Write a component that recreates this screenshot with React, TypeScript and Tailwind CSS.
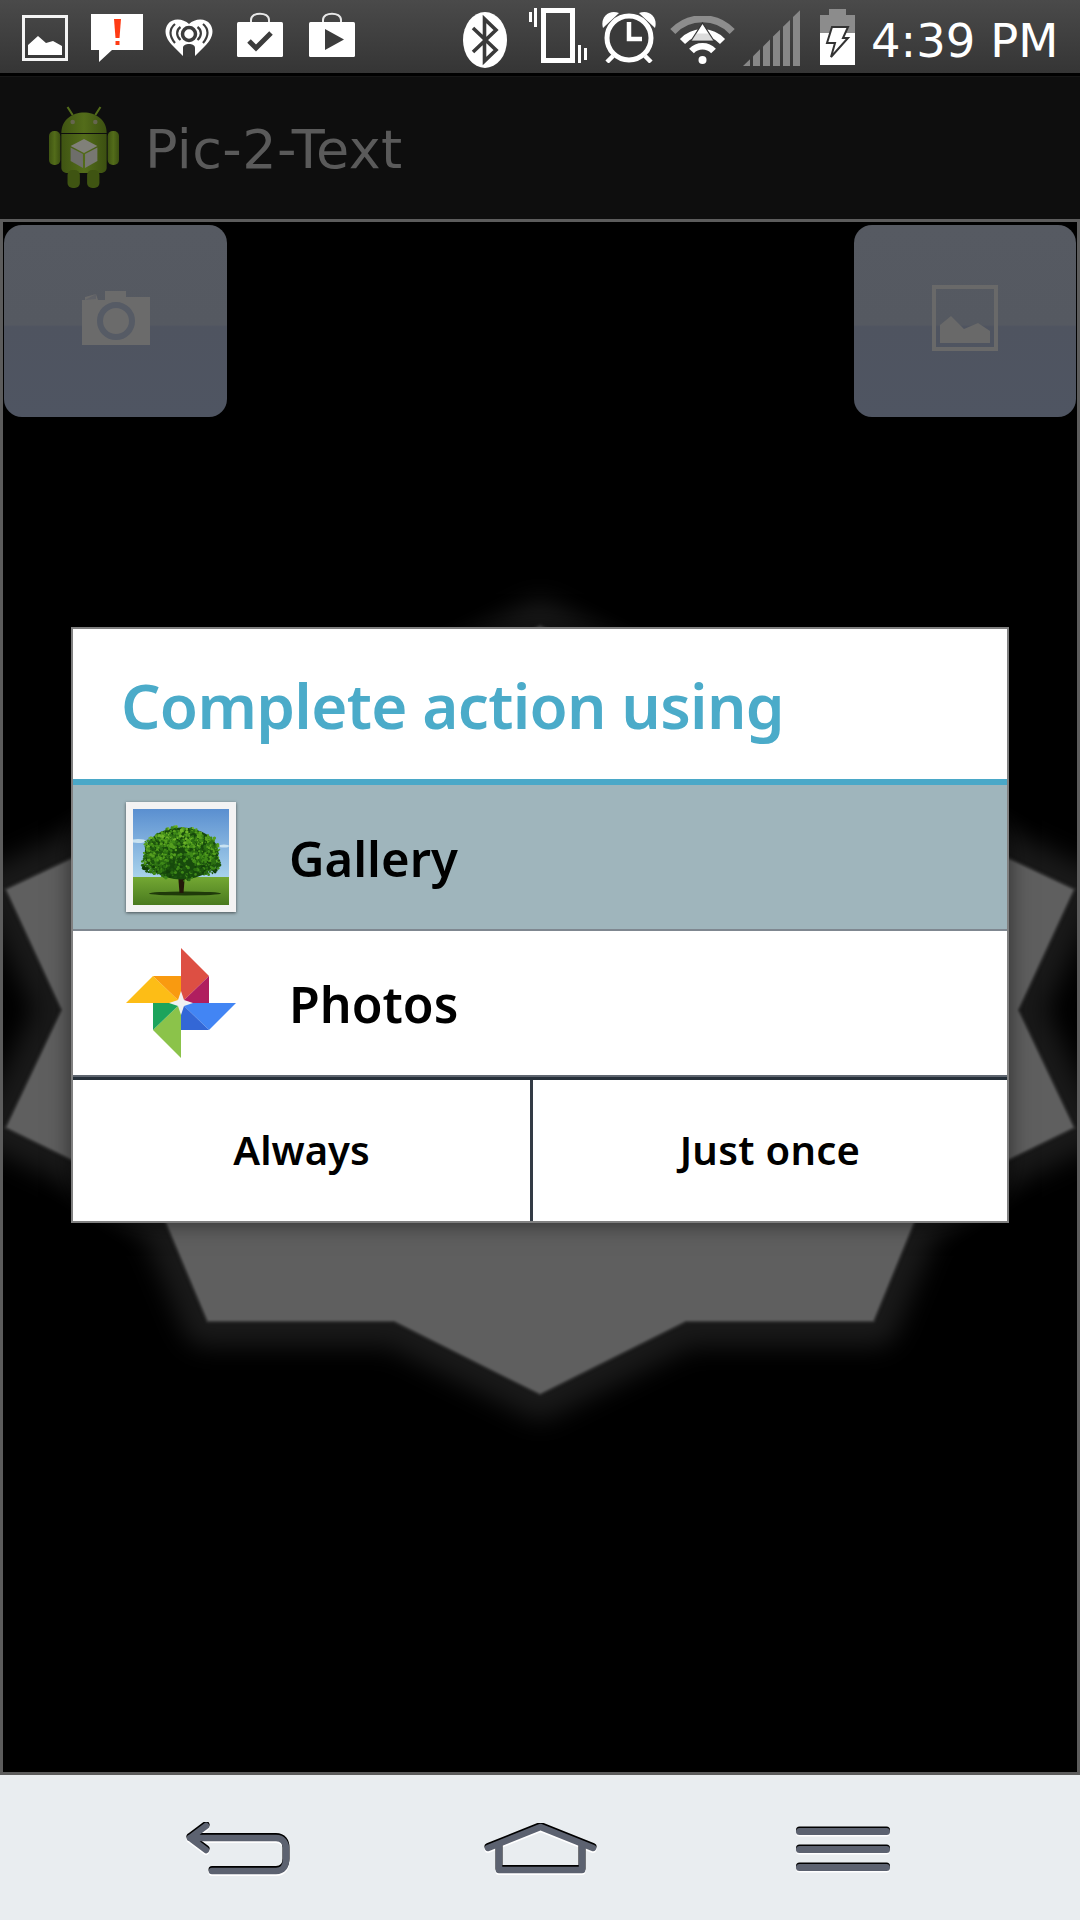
import React from "react";

const leaves = (() => {
  const out: { x: number; y: number; r: number; c: string }[] = [];
  let s = 12345;
  const rnd = () => {
    s = (s * 16807) % 2147483647;
    return s / 2147483647;
  };
  const cols = ["#123f0a", "#1d560e", "#2c6f13", "#3f8a18", "#56a01f", "#6fb52a", "#8cc63a"];
  const lobes = [
    [48, 28, 22, 11],
    [26, 40, 16, 15],
    [70, 40, 17, 15],
    [22, 54, 13, 11],
    [74, 55, 13, 11],
    [48, 50, 30, 22],
  ];
  for (let i = 0; i < 1100; i++) {
    const l = lobes[Math.floor(rnd() * lobes.length)];
    const a = rnd() * Math.PI * 2;
    const d = Math.sqrt(rnd());
    const x = l[0] + Math.cos(a) * d * l[2];
    const y = l[1] + Math.sin(a) * d * l[3];
    const up = (46 - y) / 28;
    const idx = Math.max(0, Math.min(6, Math.floor(rnd() * 3.4 + (up + 1) * 1.3)));
    out.push({ x, y, r: 0.7 + rnd() * 1.1, c: cols[idx] });
  }
  return out;
})();

function PictureIcon() {
  return (
    <svg width="46" height="46" viewBox="0 0 46 46" className="ml-[22px] mt-[15px] shrink-0">
      <rect x="1.5" y="1.5" width="43" height="43" fill="none" stroke="#f4f4f4" strokeWidth="3" />
      <path d="M6 40V30L16 21L24 28L31 26L40 31V40Z" fill="#fff" />
    </svg>
  );
}

function ChatIcon() {
  return (
    <svg width="52" height="48" viewBox="0 0 52 48" className="ml-[23px] mt-[14px] shrink-0">
      <path d="M0 0H52V36H21L8 48V36H0Z" fill="#fff" />
      <path d="M23 5H30L28.5 24H24.5Z" fill="#ff3b14" />
      <rect x="24.5" y="27" width="4" height="4" fill="#ff3b14" />
    </svg>
  );
}

function HeartIcon() {
  return (
    <svg width="48" height="38" viewBox="0 0 48 38" className="ml-[22px] mt-[19px] shrink-0">
      <path d="M24 5C18 -1 7 -1 3 5C-2 12 1 20 8 27L18 37V29C18 26 21 25 24 25C27 25 30 26 30 29V37L40 27C47 20 50 12 45 5C41 -1 30 -1 24 5Z" fill="#fff" />
      <g fill="none" stroke="#3c3c3c" strokeWidth="2.2">
        <path d="M10 24C4 17 4 10 10 5" />
        <path d="M38 24C44 17 44 10 38 5" />
        <path d="M15.5 21C11 17 11 11 15.5 8" />
        <path d="M32.5 21C37 17 37 11 32.5 8" />
      </g>
      <circle cx="24" cy="15" r="6.5" fill="#fff" stroke="#3c3c3c" strokeWidth="3.5" />
      <path d="M21 38V29C21 26.5 27 26.5 27 29V38Z" fill="#3c3c3c" />
    </svg>
  );
}

function BagIcon({ kind }: { kind: "check" | "play" }) {
  return (
    <svg width="46" height="45" viewBox="0 0 46 45" className={kind === "check" ? "ml-[24px] mt-[12px] shrink-0" : "ml-[26px] mt-[12px] shrink-0"}>
      <path d="M14 11V8C14 -0.5 32 -0.5 32 8V11" fill="none" stroke="#e8e8e8" strokeWidth="2" />
      <rect x="0" y="10" width="46" height="35" rx="1.5" fill="#fff" />
      {kind === "check" ? (
        <path d="M12 29L19 36L34 21" fill="none" stroke="#3c3c3c" strokeWidth="5" />
      ) : (
        <path d="M16 17L35 27.5L16 38Z" fill="#3c3c3c" />
      )}
    </svg>
  );
}

function BluetoothIcon() {
  return (
    <svg width="44" height="56" viewBox="0 0 44 56" className="ml-[108px] mt-[12px] shrink-0">
      <ellipse cx="22" cy="28" rx="22" ry="28" fill="#fff" />
      <path d="M10 16L33 38L21.5 49V7L33 18L10 40" fill="none" stroke="#3a3a3a" strokeWidth="3.6" />
    </svg>
  );
}

function VibrateIcon() {
  return (
    <svg width="58" height="55" viewBox="0 0 58 55" className="ml-[22px] mt-[8px] shrink-0">
      <rect x="14.5" y="2.5" width="29" height="50" fill="none" stroke="#fff" strokeWidth="5" />
      <rect x="0" y="4" width="3" height="10" fill="#fff" />
      <rect x="5" y="0" width="3" height="19" fill="#fff" />
      <rect x="49" y="37" width="3" height="18" fill="#fff" />
      <rect x="55" y="40" width="3" height="12" fill="#fff" />
    </svg>
  );
}

function AlarmIcon() {
  return (
    <svg width="54" height="52" viewBox="0 0 54 52" className="ml-[15px] mt-[11px] shrink-0">
      <path d="M1 17C-2 7 6 -2 17 2Z" fill="#fff" />
      <path d="M53 17C56 7 48 -2 37 2Z" fill="#fff" />
      <circle cx="27" cy="27" r="22" fill="#3a3a3a" stroke="#fff" strokeWidth="5" />
      <path d="M27 11V28H40" fill="none" stroke="#fff" strokeWidth="4.5" />
      <path d="M11 45L5 51M43 45L49 51" stroke="#fff" strokeWidth="4.5" />
    </svg>
  );
}

function WifiIcon() {
  return (
    <svg width="65" height="48" viewBox="0 0 65 48" className="ml-[14px] mt-[16px] shrink-0">
      <path d="M2.8 15.5A41 41 0 0 1 62.2 15.5" fill="none" stroke="#8d8d8d" strokeWidth="7" />
      <path d="M12.5 25.5A27.5 27.5 0 0 1 52.5 25.5" fill="none" stroke="#fff" strokeWidth="7" />
      <path d="M21.5 35A15 15 0 0 1 43.5 35" fill="none" stroke="#fff" strokeWidth="6.5" />
      <circle cx="32.5" cy="44" r="4" fill="#fff" />
      <path d="M32.5 7L21 25H44Z" fill="#fff" stroke="#333" strokeWidth="1.2" />
      <path d="M26 17.5L21 25H44L39 17.5Z" fill="#9a9a9a" opacity="0.35" />
    </svg>
  );
}

function SignalIcon() {
  const bars = [0, 10, 20, 30, 40, 50];
  return (
    <svg width="57" height="56" viewBox="0 0 57 56" className="ml-[8px] mt-[10px] shrink-0">
      {bars.map((x) => (
        <path key={x} d={`M${x} 56V${56 - x * 0.98}L${x + 7} ${56 - (x + 7) * 0.98}V56Z`} fill="#878787" />
      ))}
    </svg>
  );
}

function BatteryIcon() {
  return (
    <svg width="35" height="56" viewBox="0 0 35 56" className="ml-[20px] mt-[9px] shrink-0">
      <rect x="9" y="0" width="17" height="7" fill="#8c8c8c" />
      <rect x="0" y="6" width="35" height="19" fill="#8c8c8c" />
      <rect x="0" y="24" width="35" height="32" fill="#fff" />
      <path d="M12 18H28L23 29H28L11 48L15 34H7Z" fill="#fff" stroke="#333" strokeWidth="2" />
    </svg>
  );
}

function AndroidIcon() {
  return (
    <svg width="70" height="82" viewBox="0 0 68 82" preserveAspectRatio="none" className="ml-[49px] mb-[2px] shrink-0">
      <defs>
        <linearGradient id="andr" x1="0" x2="1" y1="0" y2="0">
          <stop offset="0" stopColor="#3f5412" />
          <stop offset="0.5" stopColor="#536c1a" />
          <stop offset="1" stopColor="#3c5011" />
        </linearGradient>
      </defs>
      <path d="M18 1L23 9M50 1L45 9" stroke="#536c1a" strokeWidth="2" />
      <path d="M12 27C12 -0.5 56 -0.5 56 27Z" fill="url(#andr)" />
      <circle cx="23" cy="16" r="2.2" fill="#66664f" />
      <circle cx="45" cy="16" r="2.2" fill="#66664f" />
      <path d="M12 28H56V62C56 65 53 67 50 67H18C15 67 12 65 12 62Z" fill="url(#andr)" />
      <rect x="0" y="25" width="11" height="34" rx="5" fill="url(#andr)" />
      <rect x="57" y="25" width="11" height="34" rx="5" fill="url(#andr)" />
      <rect x="18" y="64" width="12" height="18" rx="5" fill="#3f5412" />
      <rect x="37" y="64" width="12" height="18" rx="5" fill="#3f5412" />
      <path d="M34 33L47 40L34 47L21 40Z" fill="#808079" />
      <path d="M21 41.5L33 48V62L21 55Z" fill="#6e6e6a" />
      <path d="M47 41.5L35 48V62L47 55Z" fill="#777772" />
    </svg>
  );
}

function CameraIcon() {
  return (
    <svg width="68" height="54" viewBox="0 0 68 54">
      <path d="M0 54V9H3V6L14 3L16 9H23V0H44V6H68V54Z" fill="#6b6b6b" />
      <path d="M3 9L14 3V8Z" fill="#555a64" opacity="0.55" />
      <circle cx="34" cy="30" r="16" fill="#6b6b6b" stroke="#565b65" strokeWidth="6" />
    </svg>
  );
}

function GalleryGlyph() {
  return (
    <svg width="66" height="66" viewBox="0 0 66 66">
      <rect x="2" y="2" width="62" height="62" fill="none" stroke="#696969" strokeWidth="4" />
      <path d="M8 58V40L19 31L32 44L46 38L58 46V58Z" fill="#696969" />
    </svg>
  );
}

function TreeTile() {
  return (
    <svg width="96" height="96" viewBox="0 0 96 96" className="block">
      <defs>
        <linearGradient id="sky" x1="0" x2="0" y1="0" y2="1">
          <stop offset="0" stopColor="#5a8fd0" />
          <stop offset="1" stopColor="#a9d3ec" />
        </linearGradient>
        <linearGradient id="grass" x1="0" x2="0" y1="0" y2="1">
          <stop offset="0" stopColor="#74a833" />
          <stop offset="1" stopColor="#4a7a1f" />
        </linearGradient>
      </defs>
      <rect width="96" height="69" fill="url(#sky)" />
      <ellipse cx="5" cy="32" rx="8" ry="2" fill="#c8e2f1" />
      <ellipse cx="91" cy="37" rx="5" ry="1.5" fill="#c8e2f1" />
      <rect y="68" width="96" height="28" fill="url(#grass)" />
      <ellipse cx="52" cy="84.5" rx="36" ry="2" fill="#1f3a0a" />
      <path d="M45 65H52L50.5 84H46.5Z" fill="#231709" />
      <ellipse cx="48.5" cy="44.5" rx="37" ry="26" fill="#174a0c" />
      {leaves.map((l, i) => (
        <circle key={i} cx={l.x} cy={l.y} r={l.r} fill={l.c} />
      ))}
    </svg>
  );
}

function Pinwheel() {
  return (
    <svg width="110" height="110" viewBox="-55 -55 110 110" className="shrink-0">
      <path d="M0 0L0 -55L28 -27Z" fill="#dd4f43" />
      <path d="M0 0L28 -27V0Z" fill="#b01e5f" />
      <path d="M0 0H55L28 27Z" fill="#4285f4" />
      <path d="M0 0L28 27H0Z" fill="#3367d6" />
      <path d="M0 0V55L-28 27Z" fill="#8bc34a" />
      <path d="M0 0L-28 27V0Z" fill="#1ca45c" />
      <path d="M0 0H-55L-28 -27Z" fill="#fdbd16" />
      <path d="M0 0L-28 -27H0Z" fill="#f99a10" />
      <path d="M0 -12L3 -3L12 0L3 3L0 12L-3 3L-12 0L-3 -3Z" fill="#f1f1f1" />
    </svg>
  );
}

function Backdrop() {
  const pts =
    "540,625 686,698 874,698 915,798 1009,858 1075,889 1019,1010 1075,1128 1009,1160 915,1222 874,1322 686,1322 540,1395 394,1322 207,1322 165,1222 71,1160 5,1128 61,1010 5,889 71,858 165,798 207,698 394,698";
  return (
    <svg width="1074" height="1550" viewBox="3 222 1074 1550" className="absolute left-0 top-0">
      <defs>
        <filter id="glow" x="-10%" y="-10%" width="120%" height="120%" colorInterpolationFilters="sRGB">
          <feGaussianBlur stdDeviation="12" />
        </filter>
        <filter id="edge" x="-5%" y="-5%" width="110%" height="110%" colorInterpolationFilters="sRGB">
          <feGaussianBlur stdDeviation="1" />
        </filter>
      </defs>
      <polygon points={pts} fill="#191919" stroke="#191919" strokeWidth="50" strokeLinejoin="round" filter="url(#glow)" />
      <polygon points={pts} fill="#5f5f5f" stroke="#2c2c2c" strokeWidth="2" strokeLinejoin="miter" filter="url(#edge)" />
    </svg>
  );
}

function NavStroke({ d, width, height, className }: { d: string; width: number; height: number; className: string }) {
  return (
    <svg width={width} height={height} viewBox={`0 0 ${width} ${height}`} className={className}>
      <path d={d} transform="translate(0,1.5)" fill="none" stroke="#ffffff" strokeWidth="7" strokeLinecap="round" strokeLinejoin="round" />
      <path d={d} transform="translate(0,-1.5)" fill="none" stroke="#000000" strokeWidth="7" strokeLinecap="round" strokeLinejoin="round" />
      <path d={d} fill="none" stroke="#5c6270" strokeWidth="6.5" strokeLinecap="round" strokeLinejoin="round" />
    </svg>
  );
}

export default function App() {
  return (
    <div className="flex h-[1920px] w-[1080px] flex-col overflow-hidden bg-black font-['Noto_Sans',sans-serif]">
      {/* status bar */}
      <div className="flex h-[73px] shrink-0 items-start bg-gradient-to-b from-[#4a4a4a] to-[#353535]">
        <PictureIcon />
        <ChatIcon />
        <HeartIcon />
        <BagIcon kind="check" />
        <BagIcon kind="play" />
        <BluetoothIcon />
        <VibrateIcon />
        <AlarmIcon />
        <WifiIcon />
        <SignalIcon />
        <BatteryIcon />
        <span className="ml-[16px] mt-[9px] whitespace-nowrap font-['DejaVu_Sans',sans-serif] text-[46.5px] font-normal leading-[64px] text-white">
          4:39 PM
        </span>
      </div>
      <div className="h-[3px] shrink-0 bg-black" />

      {/* action bar */}
      <div className="flex h-[143px] shrink-0 items-center border-t border-[#161616] bg-[#0e0e0e]">
        <AndroidIcon />
        <span className="ml-[26px] mt-[3px] whitespace-nowrap font-['DejaVu_Sans',sans-serif] text-[54px] font-normal leading-none tracking-[0.4px] text-[#5a5a5a]">Pic-2-Text</span>
      </div>

      {/* main panel */}
      <div className="relative h-[1556px] shrink-0 overflow-hidden border-[3px] border-[#5c5c5c] bg-black">
        <Backdrop />
        <div className="relative flex items-start justify-between px-px pt-[3px]">
          <div className="flex h-[192px] w-[223px] items-center justify-center rounded-[18px] bg-[linear-gradient(#565a62_0%,#555961_52%,#4f5460_53%,#4f5562_100%)] pb-[6px]">
            <CameraIcon />
          </div>
          <div className="flex h-[192px] w-[222px] items-center justify-center rounded-[18px] bg-[linear-gradient(#565a62_0%,#555961_52%,#4f5460_53%,#4f5562_100%)] pb-[6px]">
            <GalleryGlyph />
          </div>
        </div>

        {/* dialog */}
        <div className="absolute left-[68px] top-[405px] flex h-[596px] w-[938px] flex-col border-2 border-[#808080] bg-white shadow-[0_0_22px_rgba(0,0,0,0.55)]">
          <div className="flex h-[150px] shrink-0 items-center pl-[48px] pt-[2px]">
            <span className="whitespace-nowrap text-[62px] font-semibold leading-none tracking-[-0.7px] text-[#4babc9]">Complete action using</span>
          </div>
          <div className="h-[6px] shrink-0 bg-[#4aa8c8]" />
          <div className="flex h-[144px] shrink-0 items-center bg-[#9fb5bc] pl-[53px]">
            <div className="shrink-0 bg-[#f3f3f3] p-[7px] shadow-[0_1px_3px_rgba(0,0,0,0.55)]">
              <TreeTile />
            </div>
            <span className="ml-[53px] pt-[2px] text-[49px] font-semibold leading-none text-black">Gallery</span>
          </div>
          <div className="h-[2px] shrink-0 bg-[#7f8790]" />
          <div className="flex h-[144px] shrink-0 items-center pl-[53px]">
            <Pinwheel />
            <span className="ml-[53px] pt-[2px] text-[50px] font-semibold leading-none text-black">Photos</span>
          </div>
          <div className="h-[2px] shrink-0 bg-[#5f6670]" />
          <div className="h-[3px] shrink-0 bg-[#26303a]" />
          <div className="flex min-h-0 flex-1">
            <div className="flex w-[460px] items-center justify-center border-r-[3px] border-[#333b45] pb-[2px]">
              <span className="text-[40px] font-semibold leading-none text-black">Always</span>
            </div>
            <div className="flex flex-1 items-center justify-center pb-[2px]">
              <span className="text-[40px] font-semibold leading-none tracking-[0.3px] text-black">Just once</span>
            </div>
          </div>
        </div>
      </div>

      {/* nav bar */}
      <div className="flex flex-1 items-start bg-[#e9edf0]">
        <NavStroke width={106} height={54} className="ml-[186px] mt-[47px] shrink-0" d="M20 4L4 16L20 28M4 16H90C97 16 100 21 100 27V38C100 44 97 49 90 49H26" />
        <NavStroke width={113} height={52} className="ml-[192px] mt-[48px] shrink-0" d="M4 25L56.5 4L109 25M15 24V47H98V24" />
        <div className="ml-[199px] mt-[53px] flex w-[94px] shrink-0 flex-col gap-[11px]">
          <div className="h-[7px] rounded-full bg-[#5c6270] shadow-[0_-1.5px_0_#000,0_1.5px_0_#fff]" />
          <div className="h-[7px] rounded-full bg-[#5c6270] shadow-[0_-1.5px_0_#000,0_1.5px_0_#fff]" />
          <div className="h-[7px] rounded-full bg-[#5c6270] shadow-[0_-1.5px_0_#000,0_1.5px_0_#fff]" />
        </div>
      </div>
    </div>
  );
}
